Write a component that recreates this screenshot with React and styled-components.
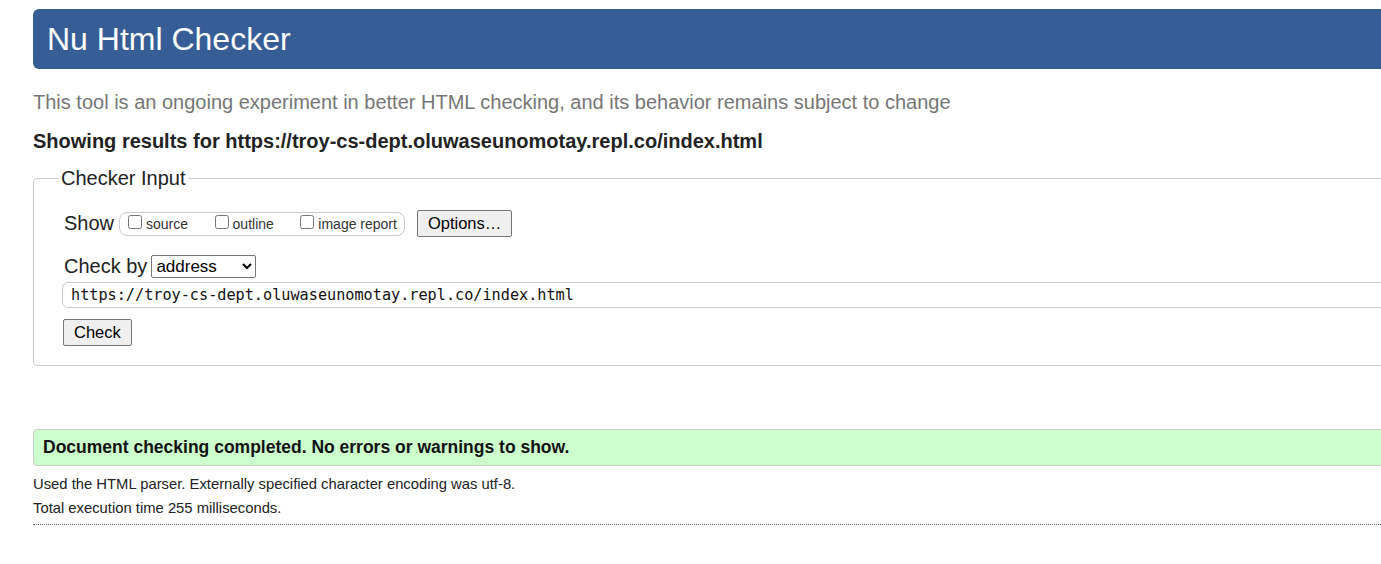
import React from 'react';
import styled, { createGlobalStyle } from 'styled-components';

const GlobalStyle = createGlobalStyle`
  html, body {
    margin: 0;
    padding: 0;
    background: #fff;
    overflow: hidden;
  }
  body {
    font-family: "Liberation Sans", Arial, sans-serif;
    color: #222;
  }
`;

const App = () => {
  const url = 'https://troy-cs-dept.oluwaseunomotay.repl.co/index.html';

  return (
    <>
      <GlobalStyle />
      <StyledPage>
        <StyledHeader>
          <h1>Nu Html Checker</h1>
        </StyledHeader>
        <StyledIntro>
          This tool is an ongoing experiment in better HTML checking, and its behavior remains subject to change
        </StyledIntro>
        <StyledResultsFor>Showing results for {url}</StyledResultsFor>

        <StyledFieldset>
          <legend>Checker Input</legend>
          <StyledRow>
            <StyledRowLabel>Show</StyledRowLabel>
            <StyledOptionGroup>
              <StyledCheck><input type="checkbox" />source</StyledCheck>
              <StyledCheck><input type="checkbox" />outline</StyledCheck>
              <StyledCheck last><input type="checkbox" />image report</StyledCheck>
            </StyledOptionGroup>
            <StyledButton>Options…</StyledButton>
          </StyledRow>
          <StyledRow>
            <StyledRowLabel>Check by</StyledRowLabel>
            <StyledSelect defaultValue="address">
              <option value="address">address</option>
              <option value="file">file upload</option>
              <option value="text">text input</option>
            </StyledSelect>
          </StyledRow>
          <StyledUrlInput type="text" defaultValue={url} />
          <StyledButton>Check</StyledButton>
        </StyledFieldset>

        <StyledSuccess>Document checking completed. No errors or warnings to show.</StyledSuccess>
        <StyledDetails>
          <p>Used the HTML parser. Externally specified character encoding was utf-8.</p>
          <p>Total execution time 255 milliseconds.</p>
        </StyledDetails>
      </StyledPage>
    </>
  );
};

export default App;

const StyledPage = styled.div`
  width: 1420px;
  margin-left: 33px;
  padding-top: 9px;
`;

const StyledHeader = styled.div`
  background: #365d95;
  border-radius: 6px 0 0 6px;
  height: 60px;
  display: flex;
  align-items: center;
  padding-left: 14px;

  h1 {
    margin: 0;
    color: #fff;
    font-weight: normal;
    font-size: 32px;
    line-height: 1;
  }
`;

const StyledIntro = styled.p`
  margin: 21px 0 0 0;
  color: #767676;
  font-size: 20px;
  line-height: 24px;
`;

const StyledResultsFor = styled.h2`
  margin: 15px 0 0 0;
  font-size: 20px;
  line-height: 24px;
  font-weight: bold;
  color: #222;
`;

const StyledFieldset = styled.fieldset`
  margin: 14px 0 0 0;
  border: 1px solid #ccc;
  border-radius: 4px;
  padding: 0 0 19px 29px;
  display: flex;
  flex-direction: column;
  align-items: flex-start;

  legend {
    margin-left: -4px;
    padding: 0 2px;
    font-size: 20px;
    color: #222;
  }
`;

const StyledRow = styled.div`
  display: flex;
  align-items: center;
  margin-top: 18px;

  &:first-of-type {
    margin-top: 20px;
  }
`;

const StyledRowLabel = styled.span`
  font-size: 20px;
  margin-right: 5px;
  padding-left: 1px;
`;

const StyledOptionGroup = styled.span`
  display: inline-flex;
  align-items: center;
  border: 1px solid #ccc;
  border-radius: 8px;
  height: 22px;
  padding: 0 7px 0 8px;
  margin-right: 12px;
`;

const StyledCheck = styled.label`
  display: inline-flex;
  align-items: center;
  font-size: 14px;
  color: #333;
  margin-right: ${props => (props.last ? '0' : '26.5px')};

  input {
    width: 14px;
    height: 14px;
    margin: -4px 4px 0 0;
  }
`;

const StyledButton = styled.button`
  font-family: "Liberation Sans", Arial, sans-serif;
  font-size: 16.5px;
  color: #000;
  background: #efefef;
  border: 1px solid #767676;
  border-radius: 2px;
  height: 27px;
  padding: 0 10px;
  margin-top: 11px;

  ${StyledRow} & {
    margin-top: 0;
  }
`;

const StyledSelect = styled.select`
  font-family: "Liberation Sans", Arial, sans-serif;
  font-size: 17px;
  color: #000;
  width: 105px;
  height: 23px;
  border: 1px solid #767676;
  border-radius: 2px;
  background: #fff;
  margin-left: -1px;
`;

const StyledUrlInput = styled.input`
  margin-top: 4px;
  margin-left: -1px;
  width: calc(100% - 20px);
  height: 26px;
  box-sizing: border-box;
  border: 1px solid #ccc;
  border-radius: 6px;
  padding: 0 8px;
  font-family: "DejaVu Sans Mono", "Liberation Mono", monospace;
  font-size: 15.2px;
  color: #111;
  outline: none;
`;

const StyledSuccess = styled.div`
  margin-top: 63px;
  background: #ccffcc;
  border: 1px solid #ccc;
  border-radius: 4px 0 0 4px;
  height: 35px;
  display: flex;
  align-items: center;
  padding-left: 9px;
  font-size: 17.5px;
  font-weight: bold;
  color: #111;
`;

const StyledDetails = styled.div`
  margin-top: 6px;
  padding-bottom: 4px;
  border-bottom: 1px dotted #666;

  p {
    margin: 0;
    font-size: 14.8px;
    line-height: 24px;
    color: #222;
  }
`;
